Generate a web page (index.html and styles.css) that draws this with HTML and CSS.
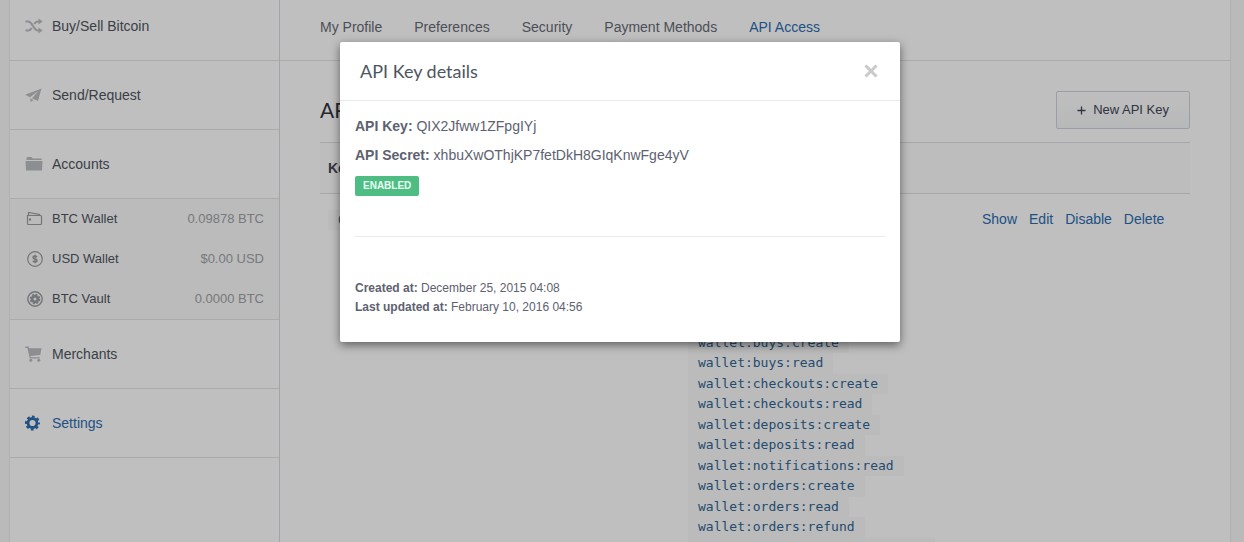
FILE: index.html
```html
<!DOCTYPE html>
<html lang="en">
<head>
<meta charset="utf-8">
<title>API Access</title>
<link rel="stylesheet" href="styles.css">
</head>
<body>
<div class="page">
  <nav class="sidebar" aria-label="Main">
    <a class="nav-item" href="#"><svg class="icon" viewBox="0 0 18 16" fill="none" stroke="currentColor" stroke-width="2"><path d="M.500 3.500h2.500c2.500 0 3.500 2.200 5 4.500s2.500 4.500 5 4.500h1M.500 12.500h2.500c1.800 0 2.900-1 3.800-2.500M9.200 6c1-1.600 2-2.500 3.800-2.500h1"/><path d="M13.500 .500l4.200 3-4.200 3zM13.500 9.500l4.200 3-4.200 3z" fill="currentColor" stroke="none"/></svg>Buy/Sell Bitcoin</a>
    <a class="nav-item" href="#"><svg class="icon" viewBox="0 0 18 16" fill="currentColor"><path d="M16.500 1.500L.200 7.800l4.600 2.400L13.500 4 7 11.300l6 2.700z"/><path d="M5 11.200l3.500 1.700-2.600 2z"/></svg>Send/Request</a>
    <a class="nav-item" href="#"><svg class="icon" viewBox="0 0 18 16" fill="currentColor"><path d="M1.500 4V2l1-1h4l1.200 1.500h9V4zM.500 5h17l-.500 9.500H1z"/></svg>Accounts</a>
    <div class="accounts">
      <a class="account" href="#"><svg class="icon" viewBox="0 0 18 16" fill="none" stroke="currentColor" stroke-width="1.200"><path d="M2.500 4.500h13a1 1 0 0 1 1 1v7a1 1 0 0 1-1 1h-12a1 1 0 0 1-1-1zM3.500 4.500V1.500l11 2v1"/><circle cx="5" cy="8.500" r=".600"/></svg>BTC Wallet<span class="balance">0.09878 BTC</span></a>
      <a class="account" href="#"><svg class="icon" viewBox="0 0 18 16" fill="none" stroke="currentColor" stroke-width="1.200"><circle cx="10" cy="8" r="7.300"/><path d="M12 6.200c-.300-.900-1-1.200-2-1.200s-2 .400-2 1.400c0 2.200 4 1 4 3.100 0 1-1 1.500-2 1.500s-1.900-.500-2.100-1.400M10 3.800v8.400" stroke-width="1.400"/></svg>USD Wallet<span class="balance">$0.00 USD</span></a>
      <a class="account" href="#"><svg class="icon" viewBox="0 0 18 16" fill="none" stroke="currentColor"><circle cx="10" cy="8" r="7.200" stroke-width="1.400"/><circle cx="10" cy="8" r="2.900" stroke-width="2.800"/><circle cx="10" cy="8" r="4.600" stroke-width="1.400" stroke-dasharray="2 1.610"/></svg>BTC Vault<span class="balance">0.0000 BTC</span></a>
    </div>
    <a class="nav-item" href="#"><svg class="icon" viewBox="0 0 18 16" fill="currentColor"><path d="M.200 .500h3.500l.600 1.700h12.200l-1.200 6.800-9.800 1 .400 1.200h9v1.300H4.800L2.400 2H.200z"/><circle cx="5.800" cy="14.200" r="1.500"/><circle cx="13.800" cy="14.200" r="1.500"/></svg>Merchants</a>
    <a class="nav-item active" href="#"><svg class="icon" viewBox="0 0 18 16" fill="none" stroke="currentColor"><circle cx="7.500" cy="8" r="4.500" stroke-width="2.800"/><circle cx="7.500" cy="8" r="6.500" stroke-width="2" stroke-dasharray="2.800 2.305" stroke-dashoffset="1.400"/></svg>Settings</a>
  </nav>

  <main class="main">
    <nav class="tabs" aria-label="Settings">
      <a class="tab" href="#">My Profile</a>
      <a class="tab" href="#">Preferences</a>
      <a class="tab" href="#">Security</a>
      <a class="tab" href="#">Payment Methods</a>
      <a class="tab active" href="#">API Access</a>
    </nav>
    <section class="content">
      <header class="content-head">
        <h1 class="heading">API Keys</h1>
        <button class="new-key" type="button"><svg class="plus" viewBox="0 0 9 9" stroke="currentColor" stroke-width="1.300"><path d="M4.500 .500v8M.500 4.500h8"/></svg>New API Key</button>
      </header>
      <table class="keys">
        <colgroup><col class="col-key"><col class="col-scopes"><col></colgroup>
        <thead><tr><th>Key</th><th>Permissions</th><th></th></tr></thead>
        <tbody><tr>
          <td><code class="chip">QIX2Jfww1ZFpgIYj</code></td>
          <td><div class="scopes">
            <code class="chip">wallet:accounts:create</code>
            <code class="chip">wallet:accounts:delete</code>
            <code class="chip">wallet:accounts:read</code>
            <code class="chip">wallet:accounts:update</code>
            <code class="chip">wallet:addresses:create</code>
            <code class="chip">wallet:addresses:read</code>
            <code class="chip">wallet:buys:create</code>
            <code class="chip">wallet:buys:read</code>
            <code class="chip">wallet:checkouts:create</code>
            <code class="chip">wallet:checkouts:read</code>
            <code class="chip">wallet:deposits:create</code>
            <code class="chip">wallet:deposits:read</code>
            <code class="chip">wallet:notifications:read</code>
            <code class="chip">wallet:orders:create</code>
            <code class="chip">wallet:orders:read</code>
            <code class="chip">wallet:orders:refund</code>
            <code class="chip">wallet:payment-methods:delete</code>
          </div></td>
          <td><div class="actions"><a href="#">Show</a><a href="#">Edit</a><a href="#">Disable</a><a href="#">Delete</a></div></td>
        </tr></tbody>
      </table>
    </section>
  </main>
</div>

<div class="backdrop">
  <div class="modal" role="dialog" aria-modal="true" aria-labelledby="modal-title">
    <header class="modal-head">
      <h2 class="modal-title" id="modal-title">API Key details</h2>
      <button class="close" type="button" aria-label="Close"><svg viewBox="0 0 14 14" stroke="currentColor" stroke-width="3"><path d="M1.500 1.500l11 11M12.500 1.500l-11 11"/></svg></button>
    </header>
    <div class="modal-body">
      <p class="detail"><strong>API Key:</strong> QIX2Jfww1ZFpgIYj</p>
      <p class="detail"><strong>API Secret:</strong> xhbuXwOThjKP7fetDkH8GIqKnwFge4yV</p>
      <span class="badge">ENABLED</span>
      <hr class="rule">
      <p class="stamp"><strong>Created at:</strong> December 25, 2015 04:08</p>
      <p class="stamp"><strong>Last updated at:</strong> February 10, 2016 04:56</p>
    </div>
  </div>
</div>
</body>
</html>
```
FILE: styles.css
```css
* { box-sizing: border-box; }

body {
  margin: 0;
  height: 100vh;
  overflow: hidden;
  background: #f8f8f8;
  color: #4e5561;
  font: 14px/20px "Liberation Sans", Arial, sans-serif;
}

a { color: inherit; text-decoration: none; }
h1, h2, p { margin: 0; }

.page {
  display: flex;
  height: 100vh;
  margin: 0 13px 0 9px;
  overflow: hidden;
  background: #fff;
  border: 1px solid #ecedf0;
  border-width: 0 1px;
}

/* Sidebar, scrolled slightly past its top */
.sidebar {
  width: 270px;
  flex: none;
  margin-top: -8px;
  border-right: 1px solid #dadbe3;
}

.nav-item {
  display: flex;
  align-items: center;
  gap: 9px;
  height: 69px;
  padding: 0 15px;
  border-bottom: 1px solid #e3e4e6;
}

.icon { width: 18px; height: 16px; flex: none; color: #bcbec2; }
.active, .active .icon { color: #2b6cb0; }

.accounts {
  background: #fafafa;
  border-bottom: 1px solid #e3e4e6;
}

.account {
  display: flex;
  align-items: center;
  gap: 9px;
  height: 40px;
  padding: 0 15px;
  font-size: 13px;
}

.account .icon { color: #9a9ca1; }
.balance { margin-left: auto; color: #a0a2a6; }

.main { flex: 1; min-width: 0; }

.tabs {
  display: flex;
  gap: 32px;
  padding: 17px 40px 23px;
  border-bottom: 1px solid #e3e4e6;
}

.tab { white-space: nowrap; color: #666a75; }
.tab.active { color: #2b6cb0; }

.content { padding: 30px 40px; }

.content-head {
  display: flex;
  align-items: center;
  justify-content: space-between;
  margin-bottom: 13px;
}

.heading { font: 400 21px/28px Lato, sans-serif; color: #30343e; }

.new-key {
  display: flex;
  align-items: center;
  gap: 7px;
  height: 38px;
  padding: 0 20px;
  color: #404755;
  font: inherit;
  font-size: 13px;
  background: linear-gradient(#fff, #f5f6f8);
  border: 1px solid #d0d3df;
  border-radius: 2px;
}

.plus { width: 9px; height: 9px; }

.keys { width: 100%; table-layout: fixed; border-collapse: collapse; }
.col-key { width: 360px; }
.col-scopes { width: 294px; }
.keys th, .keys td { padding: 15px 8px; text-align: left; vertical-align: top; }
.keys th { background: #fdfdfd; border: solid #dfe0e5; border-width: 1px 0; color: #454954; }

.scopes {
  display: grid;
  grid-auto-rows: 20px 21px;
  justify-items: start;
  padding-top: 1px;
}

.chip {
  display: inline-block;
  padding: 0 10px;
  color: #2f6594;
  font: 13px/20px "DejaVu Sans Mono", monospace;
  background: #fafafa;
}

.actions { display: flex; gap: 12px; color: #2b6cb0; }

.backdrop {
  position: absolute;
  inset: 0;
  padding: 42px 24px 42px 20px;
  background: rgba(0, 0, 0, .25);
}

.modal {
  max-width: 560px;
  margin: 0 auto;
  background: #fff;
  border-radius: 2px;
  box-shadow: 0 3px 10px rgba(0, 0, 0, .5);
}

.modal-head {
  display: flex;
  align-items: center;
  justify-content: space-between;
  padding: 17px 22px 17px 20px;
  border-bottom: 1px solid #e9eaec;
}

.modal-title { font: 400 18px/24px Lato, sans-serif; color: #4e5561; }

.close {
  display: flex;
  padding: 0;
  color: #cacaca;
  background: none;
  border: 0;
}

.close svg { width: 14px; height: 14px; }

.modal-body { padding: 15px 15px 25px; color: #5d6170; }
.detail { margin-bottom: 9px; }

.badge {
  display: table;
  margin-top: 11px;
  padding: 0 8px;
  color: #e9fff3;
  font-size: 10px;
  font-weight: 700;
  background: #4dbd83;
  border-radius: 2px;
}

.rule { margin: 40px 0 42px; border: 0; border-top: 1px solid #e9eaec; }
.stamp { font-size: 12px; line-height: 19px; }
```
